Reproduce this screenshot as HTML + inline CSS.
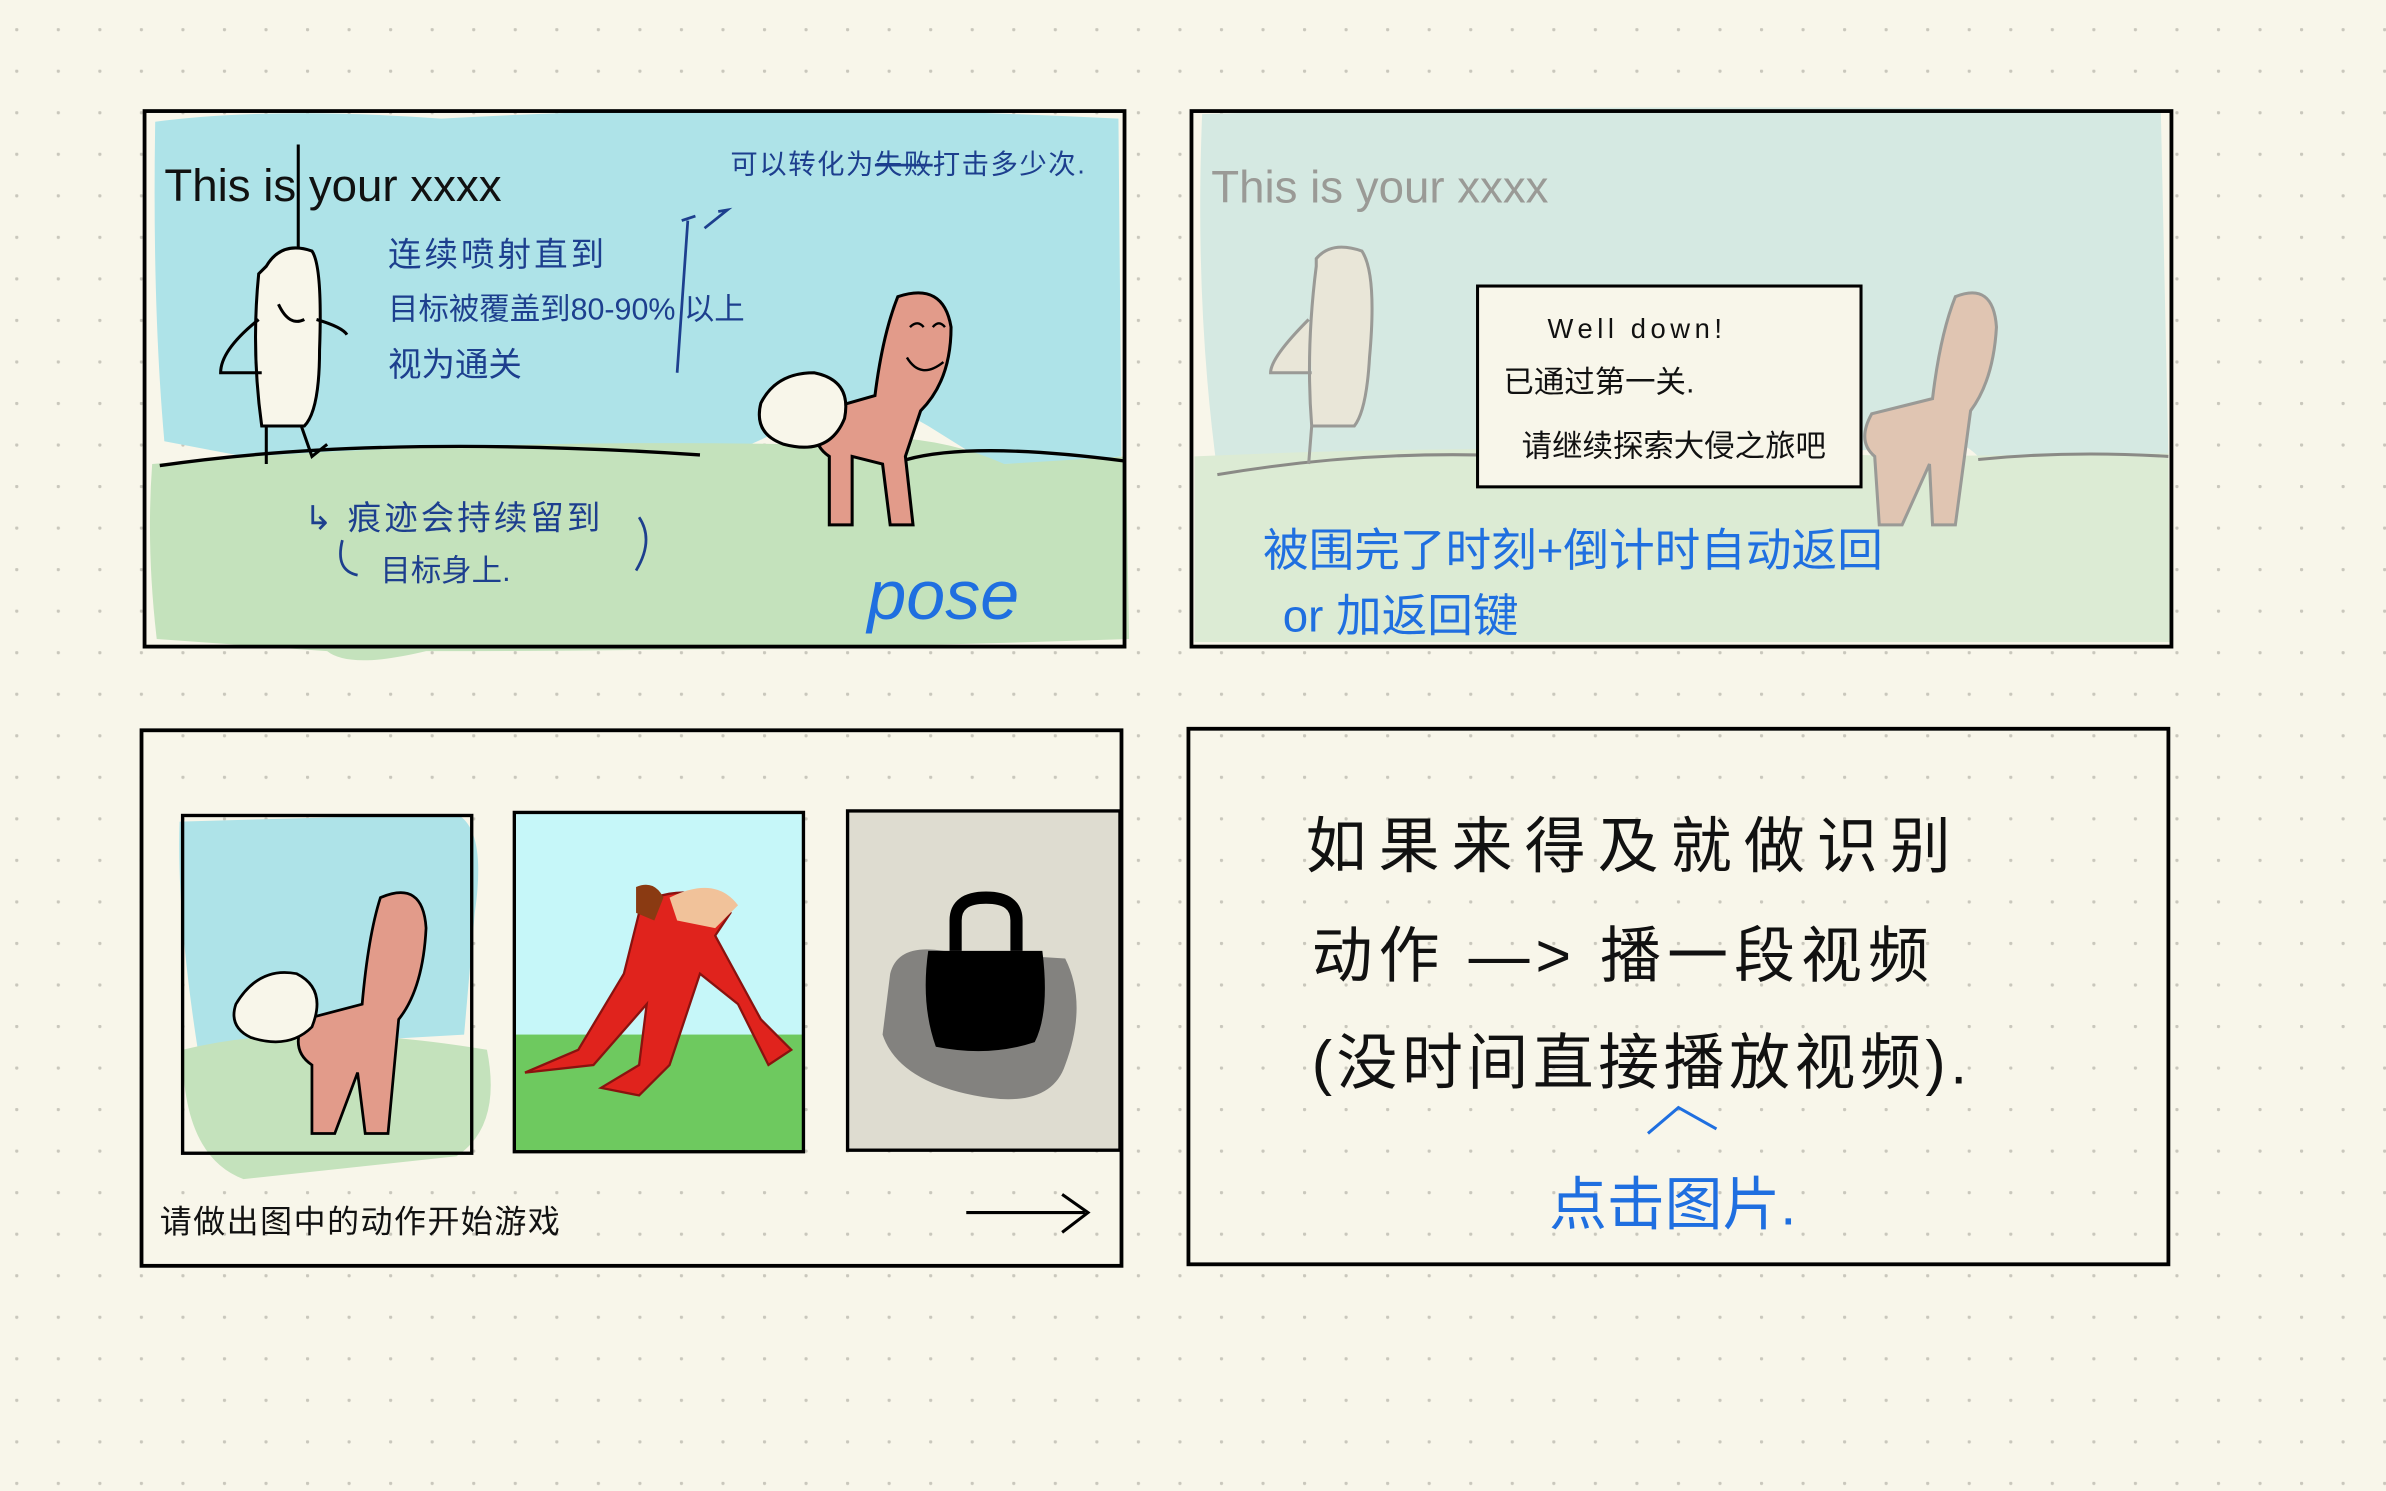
<!DOCTYPE html>
<html><head><meta charset="utf-8"><style>
html,body{margin:0;padding:0;background:#f8f6ea;}
svg{display:block}
text{font-family:"Liberation Sans","Noto Sans CJK SC",sans-serif;}
</style></head><body>
<svg width="2386" height="1491" viewBox="0 0 1568 980" preserveAspectRatio="none" xmlns="http://www.w3.org/2000/svg">
<defs>
<pattern id="dots" x="10" y="18.5" width="27.3" height="27.3" patternUnits="userSpaceOnUse">
<circle cx="1" cy="1" r="1.1" fill="#c9c7bc"/></pattern>
</defs>
<rect width="1568" height="980" fill="#f8f6ea"/>
<rect width="1568" height="980" fill="url(#dots)"/>

<!-- Panel 1 -->
<g>
<path d="M102,80 Q180,70 290,78 Q500,66 735,78 L737,300 Q700,305 650,305 L610,280 Q560,250 520,280 L480,298 L250,300 Q200,310 160,300 L108,290 Q100,200 102,80Z" fill="#aee3e8"/>
<path d="M100,305 Q300,288 520,292 Q600,278 660,305 L740,300 L742,420 Q500,428 280,428 Q230,440 215,428 L103,420 Q96,360 100,305Z" fill="#c4e2bc"/>
<rect x="95" y="73" width="644" height="352" fill="none" stroke="#000" stroke-width="2.5"/>
<path d="M105,306 Q250,285 460,299" fill="none" stroke="#000" stroke-width="2.2"/>
<path d="M596,302 Q640,290 739,303" fill="none" stroke="#000" stroke-width="2.2"/>
<text x="108" y="132" font-size="30" fill="#111">This is your xxxx</text>
<line x1="196" y1="95" x2="196" y2="175" stroke="#000" stroke-width="2"/>
<path d="M175,175 Q185,158 205,165 Q212,175 210,230 Q210,270 200,280 L172,280 Q165,230 170,180Z" fill="#f8f6ea" stroke="#000" stroke-width="2"/>
<path d="M170,210 Q145,230 145,245 L172,245 M208,210 Q225,215 228,220 M175,280 L175,305 M198,280 L205,300 L215,292" fill="none" stroke="#000" stroke-width="2"/>
<path d="M183,200 Q190,215 200,210" fill="none" stroke="#000" stroke-width="2"/>
<text x="255" y="175" font-size="22" fill="#1d3f8e" letter-spacing="2">连续喷射直到</text>
<text x="255" y="210" font-size="20" fill="#1d3f8e">目标被覆盖到80-90% 以上</text>
<text x="255" y="247" font-size="22" fill="#1d3f8e">视为通关</text>
<path d="M452,145 L445,245 M448,145 L457,142 M463,150 L478,138 L472,139" fill="none" stroke="#1d3f8e" stroke-width="1.8"/>
<text x="480" y="114" font-size="18" fill="#1d3f8e" letter-spacing="1">可以转化为<tspan text-decoration="line-through">失败</tspan>打击多少次.</text>
<text x="200" y="348" font-size="22" fill="#1d3f8e" letter-spacing="2">↳ 痕迹会持续留到</text>
<text x="250" y="382" font-size="20" fill="#1d3f8e">目标身上.</text>
<path d="M225,355 Q220,375 235,378 M420,340 Q430,355 418,375" fill="none" stroke="#1d3f8e" stroke-width="1.8"/>
<path d="M590,195 Q620,185 625,215 Q625,250 605,270 L595,300 L600,345 L585,345 L580,305 L560,300 L560,345 L545,345 L545,300 Q530,290 540,270 L575,260 Q580,220 590,195Z" fill="#e29b8a" stroke="#000" stroke-width="2"/>
<path d="M500,265 Q510,245 535,245 Q560,250 555,275 Q545,300 515,292 Q495,285 500,265Z" fill="#f8f6ea" stroke="#000" stroke-width="2"/>
<path d="M598,215 Q603,210 607,215 M613,215 Q617,210 621,215 M596,235 Q605,250 620,238" fill="none" stroke="#000" stroke-width="1.6"/>
<text x="570" y="407" font-size="46" fill="#1f6fe0" font-style="italic">pose</text>
</g>

<!-- Panel 2 -->
<g>
<path d="M790,75 Q1000,68 1420,72 L1425,300 L1300,300 Q1280,280 1250,295 L800,310 Q785,200 790,75Z" fill="#d5e9e2"/>
<path d="M785,300 Q1000,290 1250,300 L1425,298 L1426,422 L785,422Z" fill="#dcebd4"/>
<rect x="783" y="73" width="644" height="352" fill="none" stroke="#000" stroke-width="2.5"/>
<path d="M800,312 Q900,295 1000,300 M1300,302 Q1360,296 1425,300" fill="none" stroke="#8a8a86" stroke-width="2"/>
<text x="796" y="133" font-size="30" fill="#9a9a96">This is your xxxx</text>
<path d="M865,170 Q875,158 895,165 Q905,180 900,235 Q898,270 890,280 L862,280 Q858,230 865,175Z M860,210 Q835,235 835,245 L862,245 M862,280 L860,305" fill="#e9e6d8" stroke="#9a9a96" stroke-width="2"/>
<path d="M1285,195 Q1310,185 1312,215 Q1310,250 1295,270 L1285,345 L1270,345 L1268,305 L1250,345 L1235,345 L1232,300 Q1220,290 1230,272 L1270,262 Q1275,220 1285,195Z" fill="#e0c5b2" stroke="#9a9a96" stroke-width="2"/>
<rect x="971" y="188" width="252" height="132" fill="#f8f6ea" stroke="#000" stroke-width="2"/>
<text x="1017" y="222" font-size="18" fill="#111" letter-spacing="3">Well down!</text>
<text x="988" y="258" font-size="20" fill="#111">已通过第一关.</text>
<text x="1000" y="300" font-size="20" fill="#111">请继续探索大侵之旅吧</text>
<text x="830" y="372" font-size="30" fill="#1f6fe0">被围完了时刻+倒计时自动返回</text>
<text x="843" y="415" font-size="30" fill="#1f6fe0">or 加返回键</text>
</g>

<!-- Panel 3 -->
<g>
<rect x="93" y="480" width="644" height="352" fill="none" stroke="#000" stroke-width="2.5"/>
<path d="M118,540 L300,535 Q320,545 312,600 L305,680 L130,690 Q116,600 118,540Z" fill="#aee3e8"/>
<path d="M120,690 Q200,670 320,690 Q330,740 300,760 L160,775 Q120,760 120,690Z" fill="#c4e2bc"/>
<rect x="120" y="536" width="190" height="222" fill="none" stroke="#000" stroke-width="2.2"/>
<path d="M250,590 Q278,578 280,610 Q278,650 262,670 L255,745 L240,745 L235,705 L220,745 L205,745 L205,700 Q190,690 200,670 L238,660 Q242,615 250,590Z" fill="#e29b8a" stroke="#000" stroke-width="1.8"/>
<path d="M155,660 Q170,635 195,640 Q215,650 205,675 Q190,690 165,682 Q150,675 155,660Z" fill="#f8f6ea" stroke="#000" stroke-width="1.8"/>
<rect x="338" y="534" width="190" height="223" fill="#c6f7f9"/>
<rect x="338" y="680" width="190" height="77" fill="#6ec95f"/>
<path d="M430,590 Q460,580 480,600 L470,615 L500,670 L520,690 L505,700 L485,660 L460,640 L440,700 L420,720 L395,715 L420,700 L425,660 L390,700 L345,705 L380,690 L410,640 L420,600Z" fill="#e0231d" stroke="#8a120f" stroke-width="1.5"/>
<path d="M440,590 Q470,575 485,595 L470,610 L445,605Z" fill="#f1c29a"/>
<path d="M418,583 Q430,578 436,590 L430,605 L418,600Z" fill="#8a3a12"/>
<rect x="338" y="534" width="190" height="223" fill="none" stroke="#000" stroke-width="2.2"/>
<rect x="557" y="533" width="179" height="223" fill="#dedcd0" stroke="#000" stroke-width="2.2"/>
<path d="M585,640 Q590,620 620,625 L700,630 Q715,660 700,700 Q690,730 640,720 Q590,710 580,680Z" fill="#6c6c6a" opacity="0.8"/>
<path d="M628,625 L628,605 Q628,590 648,590 Q668,590 668,605 L668,625" fill="none" stroke="#000" stroke-width="8"/>
<path d="M610,625 L685,625 Q690,665 680,685 Q650,695 615,688 Q605,660 610,625Z" fill="#000"/>
<text x="105" y="810" font-size="21" fill="#111" letter-spacing="1">请做出图中的动作开始游戏</text>
<path d="M635,797 L713,797 M698,785 L715,797 L698,810" fill="none" stroke="#000" stroke-width="2"/>
</g>

<!-- Panel 4 -->
<g>
<text x="858" y="570" font-size="40" fill="#111" letter-spacing="8">如果来得及就做识别</text>
<text x="862" y="642" font-size="40" fill="#111" letter-spacing="4">动作 —&gt; 播一段视频</text>
<text x="862" y="712" font-size="40" fill="#111" letter-spacing="3">(没时间直接播放视频).</text>
<rect x="781" y="479" width="644" height="352" fill="none" stroke="#000" stroke-width="2.5"/>
<path d="M1083,745 L1103,728 L1128,742" fill="none" stroke="#1f6fe0" stroke-width="2"/>
<text x="1018" y="805" font-size="38" fill="#1f6fe0">点击图片.</text>
</g>
</svg>
</body></html>
